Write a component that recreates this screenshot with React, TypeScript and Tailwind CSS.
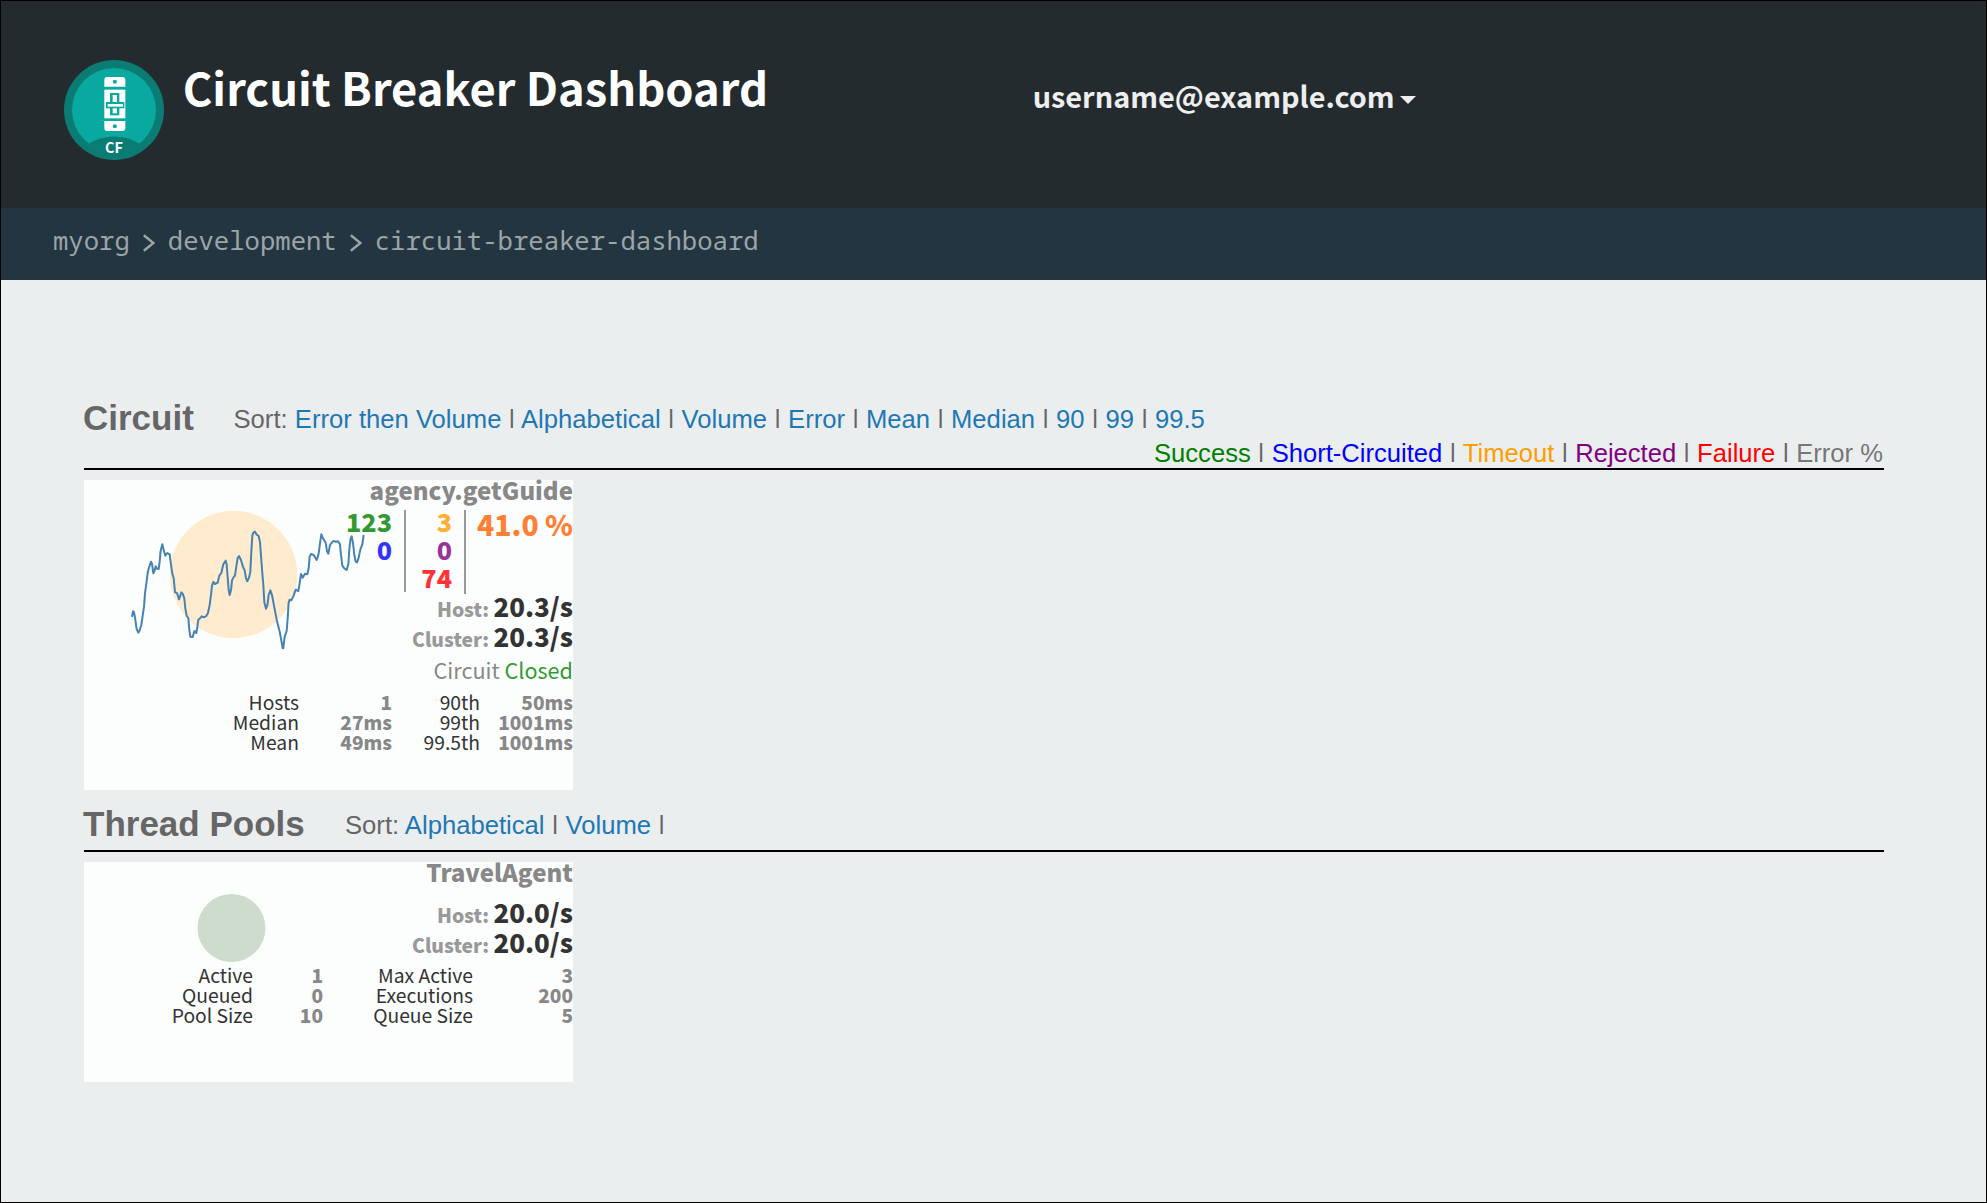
import React, { Fragment, ReactNode } from "react";

const sans = "font-['Noto_Sans_CJK_SC',sans-serif]";
const helvetica = "font-['Liberation_Sans',Arial,sans-serif]";
const mono = "font-['Noto_Sans_Mono','DejaVu_Sans_Mono',monospace]";

function Logo() {
  return (
    <svg viewBox="12 15 300 300" className="mt-[59px] size-[100px] shrink-0">
      <circle cx="162" cy="165" r="150" fill="#0b7c73" />
      <circle cx="162" cy="165" r="126" fill="#09a99f" />
      <path d="M87 266A144 144 0 0 1 238 266A126 126 0 0 1 87 266Z" fill="#0b7c73" />
      <g fill="#fff">
        <path d="M133 95V75q0-9 9-9h45q9 0 9 9v20z" />
        <path d="M133 104h63v86h-63z" />
        <path d="M133 198v21q0 9 9 9h45q9 0 9-9v-21z" />
      </g>
      <g fill="#09a99f">
        <circle cx="164.500" cy="80" r="6" />
        <circle cx="164.500" cy="214" r="6" />
        <path d="M150 114h28v67h-28z" />
      </g>
      <path d="M158 120h13v55h-13z" fill="#fff" />
      <path d="M138 141h55v19h-55z" fill="#09a99f" />
      <path d="M143 147h46v8h-46z" fill="#fff" />
      <text
        x="162"
        y="295"
        textAnchor="middle"
        className="fill-white font-['Noto_Sans_CJK_SC',sans-serif] text-[43px] font-bold"
      >
        CF
      </text>
    </svg>
  );
}

function Chevron() {
  return (
    <svg viewBox="0 0 12 18" className="mx-[13px] mt-[3px] h-[18px] w-[12px]" fill="none" stroke="#9aa5a6" strokeWidth="2.400">
      <path d="M0.800 1.300 10.400 9 0.800 16.700" />
    </svg>
  );
}

function Bar() {
  return <span className="inline-block origin-[50%_21%] scale-y-[0.8]">|</span>;
}

function Separated({ items, tail }: { items: { text: string; color: string }[]; tail?: boolean }) {
  return (
    <>
      {items.map((item, i) => (
        <Fragment key={item.text}>
          <span className={item.color}>{item.text}</span>
          {(i < items.length - 1 || tail) && (
            <>
              {" "}
              <Bar />{" "}
            </>
          )}
        </Fragment>
      ))}
    </>
  );
}

function SortLinks({ names, tail }: { names: string[]; tail?: boolean }) {
  return (
    <p className="mt-1 text-[25.650px] leading-[34px] whitespace-nowrap">
      Sort: <Separated tail={tail} items={names.map((text) => ({ text, color: "text-[#1f78b4]" }))} />
    </p>
  );
}

function Rate({ label, value }: { label: string; value: string }) {
  return (
    <p className="h-[30px] text-right text-[19.350px] leading-[30px] font-black text-[#999]">
      {label} <span className="text-[25.900px] text-[#333]">{value}</span>
    </p>
  );
}

function Stats({ rows, cols }: { rows: string[][]; cols: string }) {
  return (
    <div className={`grid text-right text-[19.300px] leading-[20px] text-[#333] ${cols}`}>
      {rows.flat().map((cell, i) => (
        <span key={i} className={i % 2 ? "text-[19.060px] font-black text-[#888]" : ""}>
          {cell}
        </span>
      ))}
    </div>
  );
}

function Card({ title, className, drawing, children }: { title: string; className: string; drawing: ReactNode; children: ReactNode }) {
  return (
    <article className={`relative mt-[10px] w-[489px] bg-[#fcfefd] ${sans} ${className}`}>
      {drawing}
      <div className="relative">
        <h3 className="text-right text-[24.050px] leading-[19px] font-black text-[#888]">{title}</h3>
        {children}
      </div>
    </article>
  );
}

const trace =
  "66,426 69,409 72,412 75,428 80,462 85,473 89,466 94,450 99,415 102,395 105,355 109,326 114,288 119,272 123,260 126,266 130,295 134,286 137,274 141,281 146,282 149,260 152,227 157,208 161,224 166,242 172,234 179,238 182,262 187,296 191,309 195,352 201,354 207,373 214,352 218,356 223,370 226,400 230,422 235,430 238,465 241,485 248,486 253,468 259,474 262,456 265,434 270,430 275,424 282,427 289,423 294,414 299,390 303,360 306,332 310,321 315,327 323,323 328,302 334,294 340,268 347,257 350,268 353,308 356,345 359,360 363,346 366,316 370,308 375,302 379,274 383,249 387,243 393,255 399,276 404,286 408,310 412,319 417,308 421,290 424,230 427,182 430,173 435,170 440,179 446,183 450,202 453,242 457,296 460,330 463,382 468,401 472,392 476,360 481,346 486,360 492,392 500,434 509,470 514,496 518,520 520,519 524,485 530,468 533,430 536,382 539,374 544,376 551,362 557,344 565,348 569,325 573,297 578,308 585,296 592,298 596,280 599,245 603,237 611,240 620,255 626,236 630,205 634,178 639,190 647,203 651,229 655,236 660,210 666,202 671,198 678,200 684,199 690,208 693,240 697,272 703,280 710,285 715,268 718,222 722,190 725,184 729,204 733,240 737,260 741,262 746,248 751,224 757,208 761,180";

export default function App() {
  return (
    <div className={`h-[1203px] w-[1987px] overflow-hidden border border-black bg-[#ebeeef] text-[#666] ${helvetica}`}>
      <header className={`flex h-[207px] items-start bg-[#242b2e] pl-[63px] ${sans}`}>
        <Logo />
        <h1 className="mt-[56px] ml-[18.700px] w-[850px] text-[45.250px] leading-[60px] font-bold text-white">
          Circuit Breaker Dashboard
        </h1>
        <div className="mt-[75.400px] flex items-center text-[28.870px] leading-[40px] font-bold text-[#eee]">
          username@example.com
          <svg viewBox="0 0 16 8" className="mt-[8px] ml-[5px] h-2 w-4" fill="#eee">
            <path d="M0 0h16L8 8z" />
          </svg>
        </div>
      </header>

      <nav className={`flex h-[72px] items-center bg-[#243542] pb-1.5 pl-[52px] text-[25.600px] text-[#9aa5a6] ${mono}`}>
        <span>myorg</span>
        <Chevron />
        <span>development</span>
        <Chevron />
        <span>circuit-breaker-dashboard</span>
      </nav>

      <main className="ml-[83px] w-[1800px] pt-[118px]">
        <section>
          <div className="flex h-[38px] items-start">
            <h2 className="-ml-px w-[150.500px] text-[35px] leading-[40px] font-bold">Circuit</h2>
            <SortLinks
              names={["Error then Volume", "Alphabetical", "Volume", "Error", "Mean", "Median", "90", "99", "99.5"]}
            />
          </div>
          <div className="h-[34px] border-b-2 border-black pr-px text-right text-[25.600px] leading-[34px]">
            <Separated
              items={[
                { text: "Success", color: "text-[#008000]" },
                { text: "Short-Circuited", color: "text-[#0000ff]" },
                { text: "Timeout", color: "text-[#ff9d00]" },
                { text: "Rejected", color: "text-[#800080]" },
                { text: "Failure", color: "text-[#ff0000]" },
                { text: "Error %", color: "text-[#777]" },
              ]}
            />
          </div>
          <Card
            title="agency.getGuide"
            className="h-[310px]"
            drawing={
              <svg viewBox="0 0 489 310" className="absolute inset-0">
                <circle cx="149.500" cy="94.500" r="63.700" fill="#ffebcd" />
                <g transform="translate(26 -5) scale(0.33333)">
                  <polyline points={trace} fill="none" stroke="#4682b4" strokeWidth="6" strokeLinejoin="round" />
                </g>
              </svg>
            }
          >
            <div className="mt-2 flex h-[84px] justify-end text-right text-[25.180px] leading-[28px] font-black">
              <div className="pr-3">
                <p className="text-[#339933]">123</p>
                <p className="text-[#3333ff]">0</p>
              </div>
              <div className="mt-[3px] h-[82px] w-0.5 bg-[#999]" />
              <div className="w-[58px] pr-3">
                <p className="text-[#ffad33]">3</p>
                <p className="text-[#993399]">0</p>
                <p className="text-[#ff3333]">74</p>
              </div>
              <div className="mt-[3px] h-[84px] w-0.5 bg-[#999]" />
              <p className="w-[107px] pt-[3px] text-[28.300px] whitespace-nowrap text-[#ff8033]">41.0 %</p>
            </div>
            <Rate label="Host:" value="20.3/s" />
            <Rate label="Cluster:" value="20.3/s" />
            <p className="mt-1 mb-[7px] text-right text-[21.620px] leading-[30px] text-[#888]">
              Circuit <span className="text-[#339933]">Closed</span>
            </p>
            <Stats
              cols="grid-cols-[215px_93px_88px_93px]"
              rows={[
                ["Hosts", "1", "90th", "50ms"],
                ["Median", "27ms", "99th", "1001ms"],
                ["Mean", "49ms", "99.5th", "1001ms"],
              ]}
            />
          </Card>
        </section>

        <section className="pt-[14px]">
          <div className="flex h-[48px] items-start border-b-2 border-black">
            <h2 className="-ml-px w-[262px] text-[35px] leading-[40px] font-bold">Thread Pools</h2>
            <SortLinks tail names={["Alphabetical", "Volume"]} />
          </div>
          <Card
            title="TravelAgent"
            className="h-[220px]"
            drawing={
              <svg viewBox="0 0 489 220" className="absolute inset-0">
                <circle cx="147.500" cy="66" r="34" fill="#cddccd" />
              </svg>
            }
          >
            <div className="mt-4 mb-2">
              <Rate label="Host:" value="20.0/s" />
              <Rate label="Cluster:" value="20.0/s" />
            </div>
            <Stats
              cols="grid-cols-[169px_70px_150px_100px]"
              rows={[
                ["Active", "1", "Max Active", "3"],
                ["Queued", "0", "Executions", "200"],
                ["Pool Size", "10", "Queue Size", "5"],
              ]}
            />
          </Card>
        </section>
      </main>
    </div>
  );
}
